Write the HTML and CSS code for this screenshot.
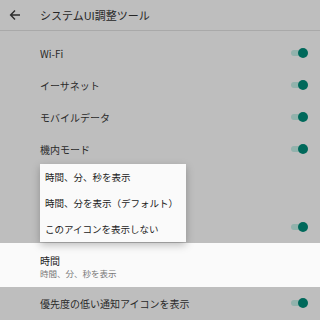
FILE: index.html
```html
<!DOCTYPE html>
<html lang="ja">
<head>
<meta charset="utf-8">
<link rel="stylesheet" href="styles.css">
</head>
<body>
<div class="screen">
  <header class="bar">
    <svg class="back" width="12" height="12" viewBox="0 0 12 12"><path d="M11 6H2M6 1.6L1.6 6 6 10.4" fill="none" stroke="#2b2b2b" stroke-width="1.4"/></svg>
    <span class="title">システムUI調整ツール</span>
  </header>
  <div class="list">
    <div class="row"><span>Wi-Fi</span><span class="tog"></span></div>
    <div class="row"><span>イーサネット</span><span class="tog"></span></div>
    <div class="row"><span>モバイルデータ</span><span class="tog"></span></div>
    <div class="row"><span>機内モード</span><span class="tog"></span></div>
    <div class="row two"></div>
    <div class="row"><span></span><span class="tog"></span></div>
    <div class="row two sel">
      <div class="lines"><span class="main">時間</span><span class="sub">時間、分、秒を表示</span></div>
    </div>
    <div class="row"><span>優先度の低い通知アイコンを表示</span><span class="tog"></span></div>
  </div>
  <div class="menu">
    <div class="item">時間、分、秒を表示</div>
    <div class="item">時間、分を表示（デフォルト）</div>
    <div class="item">このアイコンを表示しない</div>
  </div>
</div>
</body>
</html>
```
FILE: styles.css
```css
html, body {
  margin: 0;
  padding: 0;
  background: #bebebe;
}
.screen {
  position: relative;
  width: 320px;
  height: 320px;
  overflow: hidden;
  font-family: "Noto Sans CJK JP", "Noto Sans", sans-serif;
  color: #2a2a2a;
}
.bar {
  height: 31px;
  border-bottom: 1px solid #a9a9a9;
  display: flex;
  align-items: center;
  box-sizing: border-box;
}
.back {
  margin-left: 9px;
  margin-right: 19px;
}
.title {
  font-size: 11px;
  color: #262626;
}
.list {
  padding-top: 6px;
}
.row {
  height: 32px;
  display: flex;
  align-items: center;
  justify-content: space-between;
  padding: 0 12px 0 40px;
  font-size: 10px;
}
.row.two {
  height: 46px;
}
.row.sel {
  height: 44px;
  background: #fafafa;
  padding-top: 3px;
  box-sizing: border-box;
}
.lines {
  display: flex;
  flex-direction: column;
  line-height: 13px;
}
.main {
  font-size: 10px;
  color: #222;
}
.sub {
  font-size: 8.5px;
  color: #777;
}
.tog {
  position: relative;
  width: 17px;
  height: 10px;
}
.tog::before {
  content: "";
  position: absolute;
  left: 0;
  top: 2px;
  width: 15px;
  height: 6px;
  border-radius: 3px;
  background: #93b3ad;
}
.tog::after {
  content: "";
  position: absolute;
  right: 0;
  top: 0;
  width: 10px;
  height: 10px;
  border-radius: 50%;
  background: #00695b;
}
.menu {
  position: absolute;
  left: 40px;
  top: 164px;
  width: 146px;
  background: #fafafa;
  box-shadow: 0 3px 8px rgba(0,0,0,0.25);
}
.item {
  height: 26px;
  display: flex;
  align-items: center;
  padding-left: 5px;
  font-size: 9.5px;
  color: #222;
  white-space: nowrap;
}
```
